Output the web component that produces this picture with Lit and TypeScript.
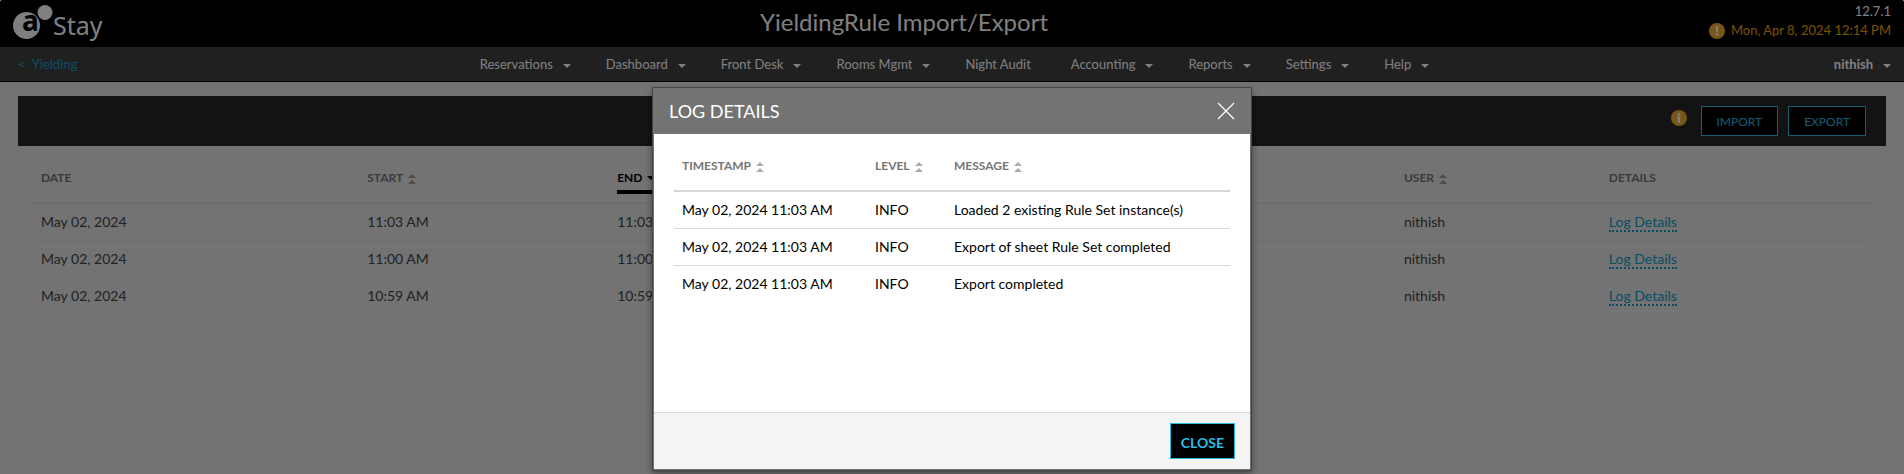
import { LitElement, html, css, svg, nothing } from "lit";
import { customElement, property, state } from "lit/decorators.js";

interface ExportRun {
  date: string;
  start: string;
  end: string;
  user: string;
}

interface LogEntry {
  timestamp: string;
  level: string;
  message: string;
}

const MENU: { label: string; caret: boolean }[] = [
  { label: "Reservations", caret: true },
  { label: "Dashboard", caret: true },
  { label: "Front Desk", caret: true },
  { label: "Rooms Mgmt", caret: true },
  { label: "Night Audit", caret: false },
  { label: "Accounting", caret: true },
  { label: "Reports", caret: true },
  { label: "Settings", caret: true },
  { label: "Help", caret: true },
];

const RUNS: ExportRun[] = [
  { date: "May 02, 2024", start: "11:03 AM", end: "11:03 AM", user: "nithish" },
  { date: "May 02, 2024", start: "11:00 AM", end: "11:00 AM", user: "nithish" },
  { date: "May 02, 2024", start: "10:59 AM", end: "10:59 AM", user: "nithish" },
];

const LOG: LogEntry[] = [
  { timestamp: "May 02, 2024 11:03 AM", level: "INFO", message: "Loaded 2 existing Rule Set instance(s)" },
  { timestamp: "May 02, 2024 11:03 AM", level: "INFO", message: "Export of sheet Rule Set completed" },
  { timestamp: "May 02, 2024 11:03 AM", level: "INFO", message: "Export completed" },
];

const caret = html`<svg class="caret" width="8" height="4" viewBox="0 0 8 4" aria-hidden="true">
  <path d="M0 0h8L4 4z" fill="currentColor" />
</svg>`;

const sortIcon = html`<svg class="sort" width="8" height="10" viewBox="0 0 8 10" aria-hidden="true">
  <path d="M4 0l4 4H0zM4 6l4 4H0z" fill="currentColor" />
</svg>`;

const badge = (glyph: unknown) => html`<svg class="badge" width="16" height="16" viewBox="0 0 16 16" aria-hidden="true">
  <circle cx="8" cy="8" r="8" fill="#f0ad35" />
  ${glyph}
</svg>`;

const alertBadge = badge(svg`<path d="M6.800 3h2.400l-.4 6.200H7.200z" fill="#fff" /><circle cx="8" cy="11.500" r="1.300" fill="#fff" />`);
const infoBadge = badge(svg`<circle cx="8" cy="4.300" r="1.300" fill="#fff" /><path d="M6.300 6.500h3V13h-2.500V8h-.5z" fill="#fff" />`);

const shared = css`
  :host {
    font-family: Lato, "Open Sans", sans-serif;
    box-sizing: border-box;
  }
  *,
  *::before,
  *::after {
    box-sizing: inherit;
  }
  button {
    font: inherit;
    color: inherit;
    background: none;
    border: 0;
    margin: 0;
    padding: 0;
    cursor: pointer;
  }
  a {
    text-decoration: none;
  }
  table {
    width: 100%;
    border-collapse: collapse;
    table-layout: fixed;
  }
  th,
  td {
    text-align: left;
    padding: 0 8px;
    white-space: nowrap;
  }
  th {
    font-size: 12px;
    line-height: 16px;
    font-weight: 700;
  }
  td {
    font-size: 14px;
    line-height: 20px;
    height: 37px;
  }
  .sort-button {
    display: inline-flex;
    align-items: center;
    gap: 5px;
  }
  .sort {
    margin-top: 2px;
  }
`;

@customElement("app-header")
class AppHeader extends LitElement {
  static styles = [
    shared,
    css`
      :host {
        display: block;
      }
      .top {
        display: grid;
        grid-template-columns: 280px 1fr 376px;
        height: 47px;
        background: #000;
        color: #fff;
      }
      .logo {
        display: block;
        margin-left: 12px;
      }
      .title {
        margin: 0;
        font-size: 24px;
        line-height: 44px;
        font-weight: 400;
        text-align: center;
      }
      .status {
        display: flex;
        flex-direction: column;
        align-items: flex-end;
        padding: 2px 13px 0 0;
        font-size: 13px;
        line-height: 19px;
      }
      .clock {
        display: flex;
        align-items: center;
        gap: 6px;
        color: #f0a400;
      }
      .bar {
        display: grid;
        grid-template-columns: 1fr auto 1fr;
        align-items: center;
        height: 35px;
        padding: 0 13px 0 18px;
        background: #404040;
        border-bottom: 1px solid #000;
        color: #fff;
        font-size: 13px;
        line-height: 18px;
      }
      .back {
        color: #0f9fcc;
        white-space: pre;
      }
      .menu {
        display: flex;
        gap: 35px;
        margin: 0;
        padding: 0;
        list-style: none;
      }
      .item {
        display: inline-flex;
        align-items: center;
        gap: 10px;
      }
      .plain {
        padding-right: 5px;
      }
      .caret {
        margin-top: 3px;
      }
      .user {
        justify-self: end;
        font-weight: 700;
      }
    `,
  ];

  render() {
    return html`
      <header class="top">
        <svg class="logo" width="96" height="46" viewBox="12 0 96 46" role="img" aria-label="Stay">
          <circle cx="26.500" cy="25.500" r="13.500" fill="#fff" />
          <circle cx="45" cy="12.500" r="7.500" fill="#fff" />
          <text x="22" y="31" font-family="Noto Sans, sans-serif" font-weight="700" font-size="28" fill="#000">a</text>
          <text x="53" y="35" font-family="Noto Sans, sans-serif" font-size="25" fill="#fff">Stay</text>
        </svg>
        <h1 class="title">YieldingRule Import/Export</h1>
        <div class="status">
          <span>12.7.1</span>
          <span class="clock">${alertBadge}<span>Mon, Apr 8, 2024 12:14 PM</span></span>
        </div>
      </header>
      <nav class="bar">
        <a class="back" href="#yielding">&lt;  Yielding</a>
        <ul class="menu">
          ${MENU.map(
            (m) => html`<li>
              <button class=${m.caret ? "item" : "item plain"} type="button">${m.label}${m.caret ? caret : nothing}</button>
            </li>`
          )}
        </ul>
        <button class="item user" type="button">nithish${caret}</button>
      </nav>
    `;
  }
}

@customElement("export-runs")
class ExportRuns extends LitElement {
  static styles = [
    shared,
    css`
      :host {
        display: block;
        padding: 14px 18px 0;
      }
      .toolbar {
        display: flex;
        justify-content: flex-end;
        gap: 10px;
        height: 50px;
        padding: 10px 20px;
        background: #262626;
      }
      .info {
        padding: 4px 4px 0 0;
      }
      .action {
        height: 30px;
        padding: 2px 15px 0;
        border: 1px solid #2bbbe0;
        background: #000;
        color: #2bbbe0;
        font-size: 12px;
        line-height: 16px;
      }
      .grid {
        padding: 0 15px;
      }
      .date {
        width: 17.75%;
      }
      .start {
        width: 13.6%;
      }
      .user {
        width: 11.15%;
      }
      .details {
        width: 14.7%;
      }
      th {
        height: 57px;
        padding-top: 7px;
        color: #757575;
      }
      .sort {
        color: #9a9a9a;
      }
      tr {
        border-bottom: 1px solid #dcdcdc;
      }
      thead tr {
        border-bottom-width: 2px;
      }
      tbody tr:last-child {
        border-bottom: 0;
      }
      td {
        color: #444;
      }
      .sorted {
        color: #000;
        border-bottom: 4px solid #000;
        padding: 8px 0 4px;
      }
      .link {
        color: #0e9cc4;
        border-bottom: 2px dotted #0e9cc4;
      }
    `,
  ];

  render() {
    return html`
      <div class="toolbar">
        <span class="info">${infoBadge}</span>
        <button class="action" type="button">IMPORT</button>
        <button class="action" type="button">EXPORT</button>
      </div>
      <div class="grid">
        <table>
          <thead>
            <tr>
              <th class="date">DATE</th>
              <th class="start"><button class="sort-button" type="button">START${sortIcon}</button></th>
              <th><button class="sort-button sorted" type="button">END${caret}</button></th>
              <th class="user"><button class="sort-button" type="button">USER${sortIcon}</button></th>
              <th class="details">DETAILS</th>
            </tr>
          </thead>
          <tbody>
            ${RUNS.map(
              (r) => html`<tr>
                <td>${r.date}</td>
                <td>${r.start}</td>
                <td>${r.end}</td>
                <td>${r.user}</td>
                <td><a class="link" href="#log">Log Details</a></td>
              </tr>`
            )}
          </tbody>
        </table>
      </div>
    `;
  }
}

@customElement("log-dialog")
class LogDialog extends LitElement {
  @property({ attribute: false }) entries: LogEntry[] = [];

  static styles = [
    shared,
    css`
      :host {
        display: flex;
        flex-direction: column;
        width: 600px;
        border: 1px solid #454545;
        box-shadow: 0 3px 7px rgba(0, 0, 0, 0.4);
      }
      .frame {
        border: solid #737373;
        border-width: 0 1px 1px;
        background: #fff;
      }
      .head {
        display: flex;
        align-items: center;
        justify-content: space-between;
        height: 46px;
        padding: 0 15px;
        background: #737373;
        color: #fff;
      }
      .heading {
        margin: 0;
        font-size: 18px;
        line-height: 24px;
        font-weight: 400;
      }
      .close-icon {
        display: block;
        width: 18px;
        height: 18px;
      }
      .body {
        min-height: 278px;
        padding: 0 20px;
      }
      .timestamp {
        width: 193px;
      }
      .level {
        width: 79px;
      }
      th {
        height: 57px;
        padding-top: 7px;
        color: #757575;
      }
      td {
        color: #000;
      }
      tr {
        border-bottom: 1px solid #d9d9d9;
      }
      thead tr {
        border-bottom-width: 2px;
      }
      tbody tr:last-child {
        border-bottom: 0;
      }
      .sort {
        color: #ababab;
      }
      .foot {
        display: flex;
        justify-content: flex-end;
        padding: 10px 15px;
        border-top: 1px solid #d9d9d9;
        background: #f4f4f4;
      }
      .close {
        height: 36px;
        padding: 4px 10px 0;
        border: 1px solid #2bbbe0;
        background: #000;
        color: #2bbbe0;
        font-size: 14px;
        line-height: 18px;
        font-weight: 700;
      }
    `,
  ];

  private dismiss() {
    this.dispatchEvent(new CustomEvent("dismiss"));
  }

  render() {
    return html`
      <div class="frame" role="dialog" aria-labelledby="log-title">
        <div class="head">
          <h2 class="heading" id="log-title">LOG DETAILS</h2>
          <button type="button" aria-label="Close dialog" @click=${this.dismiss}>
            <svg class="close-icon" viewBox="0 0 18 18" aria-hidden="true">
              <path d="M1 1l16 16M17 1L1 17" stroke="#fff" stroke-width="1.200" />
            </svg>
          </button>
        </div>
        <div class="body">
          <table>
            <thead>
              <tr>
                <th class="timestamp"><button class="sort-button" type="button">TIMESTAMP${sortIcon}</button></th>
                <th class="level"><button class="sort-button" type="button">LEVEL${sortIcon}</button></th>
                <th><button class="sort-button" type="button">MESSAGE${sortIcon}</button></th>
              </tr>
            </thead>
            <tbody>
              ${this.entries.map(
                (e) => html`<tr>
                  <td>${e.timestamp}</td>
                  <td>${e.level}</td>
                  <td>${e.message}</td>
                </tr>`
              )}
            </tbody>
          </table>
        </div>
        <div class="foot">
          <button class="close" type="button" @click=${this.dismiss}>CLOSE</button>
        </div>
      </div>
    `;
  }
}

@customElement("app-root")
class AppRoot extends LitElement {
  @state() private logOpen = true;

  static styles = css`
    :host {
      display: block;
      min-height: 100vh;
      background: #fff;
    }
    .shell {
      min-height: 100vh;
      background: #e6e6e6;
      border-radius: 2px 2px 0 0;
      overflow: hidden;
    }
    .overlay {
      position: fixed;
      inset: 0;
      display: flex;
      justify-content: center;
      align-items: flex-start;
      padding-top: 87px;
      border-radius: 2px 2px 0 0;
      background: rgba(0, 0, 0, 0.5);
    }
  `;

  render() {
    return html`
      <div class="shell">
        <app-header></app-header>
        <export-runs></export-runs>
      </div>
      ${this.logOpen
        ? html`<div class="overlay">
            <log-dialog .entries=${LOG} @dismiss=${() => (this.logOpen = false)}></log-dialog>
          </div>`
        : nothing}
    `;
  }
}
